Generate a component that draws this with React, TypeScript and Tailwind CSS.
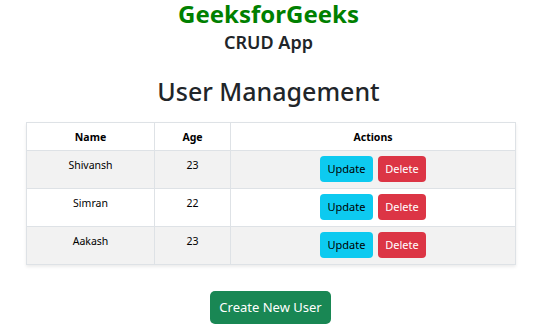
import React from "react";

const users = [
  { name: "Shivansh", age: 23 },
  { name: "Simran", age: 22 },
  { name: "Aakash", age: 23 },
];

export default function App() {
  return (
    <div className="min-h-[334px] bg-white text-[#212529] font-['Noto_Sans',sans-serif]">
      <div className="flex flex-col items-center pt-[1px]">
        <h1 className="text-[24px] leading-[25px] font-bold text-[#008000]">GeeksforGeeks</h1>
        <h2 className="mt-[5px] text-[18px] leading-[22px] font-semibold">CRUD App</h2>
        <h3 className="mt-[21px] text-[25px] leading-[34px] font-medium">User Management</h3>
      </div>

      <div className="ml-[26px] mt-[14px] w-[490px] shadow-[0_2px_3px_rgba(0,0,0,0.08)]">
        <table className="w-full border-collapse border border-[#dee2e6] text-[10.5px] text-black">
          <thead>
            <tr className="h-[28px]">
              <th className="w-[128px] border border-[#dee2e6] pt-[2px] font-bold">Name</th>
              <th className="w-[76px] border border-[#dee2e6] pt-[2px] font-bold">Age</th>
              <th className="border border-[#dee2e6] pt-[2px] font-bold">Actions</th>
            </tr>
          </thead>
          <tbody>
            {users.map((u, i) => (
              <tr key={u.name} className={i % 2 === 0 ? "h-[38px] bg-[#f2f2f2]" : "h-[38px] bg-white"}>
                <td className="border border-[#dee2e6] px-2 pt-[7px] text-center align-top">{u.name}</td>
                <td className="border border-[#dee2e6] px-2 pt-[7px] text-center align-top">{u.age}</td>
                <td className="border border-[#dee2e6] px-2 pt-[5px] pb-[5px] align-top">
                  <div className="flex justify-center gap-[5px]">
                    <button className="h-[26px] w-[53px] rounded-[4px] bg-[#0dcaf0] text-[11px] text-black">Update</button>
                    <button className="h-[26px] w-[48px] rounded-[4px] bg-[#dc3545] text-[11px] text-white">Delete</button>
                  </div>
                </td>
              </tr>
            ))}
          </tbody>
        </table>
      </div>

      <div className="mt-[26px] flex justify-center pl-[4px]">
        <button className="h-[33px] w-[121px] rounded-[5px] bg-[#198754] text-[13px] text-white">Create New User</button>
      </div>
    </div>
  );
}
